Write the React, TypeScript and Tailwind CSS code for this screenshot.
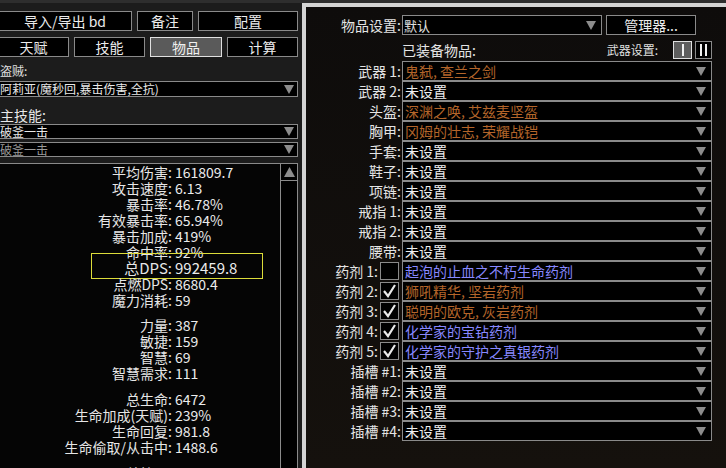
import React from 'react';

const FONT = "font-['Noto_Sans_CJK_SC','Noto_Sans',sans-serif]";

function Tri({ className = '' }: { className?: string }) {
  return (
    <svg width="10" height="9" viewBox="0 0 10 9" className={className}>
      <polygon points="0,0 10,0 5,9" fill="#8c8c8c" />
    </svg>
  );
}

function UpTri() {
  return (
    <svg width="11" height="10" viewBox="0 0 11 10">
      <polygon points="0,10 11,10 5.5,0" fill="#8c8c8c" />
    </svg>
  );
}

function Check() {
  return (
    <svg width="15" height="14" viewBox="0 0 15 14">
      <polyline points="2,7 6,12 13,1" fill="none" stroke="#e8e8e8" strokeWidth="2.2" />
    </svg>
  );
}

function Btn({ w, text, active = false }: { w: string; text: string; active?: boolean }) {
  return (
    <div
      className={`${w} h-[20px] flex items-center justify-center border text-[14px] leading-none ${
        active ? 'bg-[#5a5a5a] border-[#e0e0e0] text-[#f0f0f0]' : 'bg-black border-[#8a8a8a] text-[#ececec]'
      }`}
    >
      {text}
    </div>
  );
}

function LDrop({ text, h, dim = false }: { text: string; h: string; dim?: boolean }) {
  return (
    <div className={`${h} w-full flex items-center justify-between bg-black border border-[#8a8a8a]`}>
      <span className={`pl-[1px] text-[12px] leading-none ${dim ? 'text-[#9a9a9a]' : 'text-[#e8e8e8]'}`}>{text}</span>
      <Tri className="mr-[3px]" />
    </div>
  );
}

type Stat = { l: string; v: string; big?: boolean };

const g1: Stat[] = [
  { l: '平均伤害', v: '161809.7' },
  { l: '攻击速度', v: '6.13' },
  { l: '暴击率', v: '46.78%' },
  { l: '有效暴击率', v: '65.94%' },
  { l: '暴击加成', v: '419%' },
  { l: '命中率', v: '92%' },
  { l: '总DPS', v: '992459.8', big: true },
  { l: '点燃DPS', v: '8680.4' },
  { l: '魔力消耗', v: '59' },
];
const g2: Stat[] = [
  { l: '力量', v: '387' },
  { l: '敏捷', v: '159' },
  { l: '智慧', v: '69' },
  { l: '智慧需求', v: '111' },
];
const g3: Stat[] = [
  { l: '总生命', v: '6472' },
  { l: '生命加成(天赋)', v: '239%' },
  { l: '生命回复', v: '981.8' },
  { l: '生命偷取/从击中', v: '1488.6' },
];
const g4: Stat[] = [{ l: '总护甲', v: '0' }];

function StatLine({ s }: { s: Stat }) {
  return (
    <div className="relative flex h-[16px] items-center">
      <div className={`w-[173px] text-right text-[#e6e6e6] leading-[16px] ${s.big ? 'text-[15px]' : 'text-[14px]'}`}>
        {s.l}:
      </div>
      <div className={`pl-[3px] text-[#ececec] leading-[16px] ${s.big ? 'text-[15px]' : 'text-[14px]'}`}>{s.v}</div>
      {s.big && (
        <div className="absolute left-[92px] top-[-7px] w-[172px] h-[26px] border border-[#dcdc3a]" />
      )}
    </div>
  );
}

function Group({ items, mt }: { items: Stat[]; mt: string }) {
  return (
    <div className={mt}>
      {items.map((s) => (
        <StatLine key={s.l} s={s} />
      ))}
    </div>
  );
}

type Item = { label: string; text: string; color: string; check?: boolean };

const items: Item[] = [
  { label: '武器 1:', text: '鬼弑, 查兰之剑', color: 'text-[#b4652a]' },
  { label: '武器 2:', text: '未设置', color: 'text-[#f0f0f0]' },
  { label: '头盔:', text: '深渊之唤, 艾兹麦坚盔', color: 'text-[#b4652a]' },
  { label: '胸甲:', text: '冈姆的壮志, 荣耀战铠', color: 'text-[#b4652a]' },
  { label: '手套:', text: '未设置', color: 'text-[#f0f0f0]' },
  { label: '鞋子:', text: '未设置', color: 'text-[#f0f0f0]' },
  { label: '项链:', text: '未设置', color: 'text-[#f0f0f0]' },
  { label: '戒指 1:', text: '未设置', color: 'text-[#f0f0f0]' },
  { label: '戒指 2:', text: '未设置', color: 'text-[#f0f0f0]' },
  { label: '腰带:', text: '未设置', color: 'text-[#f0f0f0]' },
  { label: '药剂 1:', text: '起泡的止血之不朽生命药剂', color: 'text-[#8888ff]', check: false },
  { label: '药剂 2:', text: '狮吼精华, 坚岩药剂', color: 'text-[#b4652a]', check: true },
  { label: '药剂 3:', text: '聪明的欧克, 灰岩药剂', color: 'text-[#b4652a]', check: true },
  { label: '药剂 4:', text: '化学家的宝钻药剂', color: 'text-[#8888ff]', check: true },
  { label: '药剂 5:', text: '化学家的守护之真银药剂', color: 'text-[#8888ff]', check: true },
  { label: '插槽 #1:', text: '未设置', color: 'text-[#f0f0f0]' },
  { label: '插槽 #2:', text: '未设置', color: 'text-[#f0f0f0]' },
  { label: '插槽 #3:', text: '未设置', color: 'text-[#f0f0f0]' },
  { label: '插槽 #4:', text: '未设置', color: 'text-[#f0f0f0]' },
];

function ItemRow({ it }: { it: Item }) {
  const hasCheck = it.check !== undefined;
  return (
    <div className="flex h-[20px]">
      <div className="w-[96px] flex items-center justify-end">
        <span className={`text-[14px] leading-none text-[#e4e4e4] ${hasCheck ? '' : 'pr-[1px]'}`}>{it.label}</span>
        {hasCheck && (
          <div className="ml-[2px] mr-[3px] w-[19px] h-[18px] border border-[#8a8a8a] bg-black flex items-center justify-center">
            {it.check && <Check />}
          </div>
        )}
      </div>
      <div className="flex-1 flex items-center justify-between bg-black border border-[#8a8a8a]">
        <span className={`pl-[2px] text-[14px] leading-none ${it.color}`}>{it.text}</span>
        <Tri className="mr-[5px]" />
      </div>
    </div>
  );
}

export default function App() {
  return (
    <div className={`w-[726px] h-[468px] overflow-hidden flex flex-col bg-[#1c1c1c] ${FONT}`}>
      <div className="h-[3px] bg-[#2e2e2e] shrink-0" />
      <div className="flex flex-1 min-h-0">
        {/* Left panel */}
        <div className="w-[302px] shrink-0 bg-[#1c1c1c] overflow-hidden">
          <div className="ml-[-2px] w-[300px] pt-[8px] flex flex-col h-full">
            <div className="flex gap-[5px]">
              <Btn w="w-[134px]" text="导入/导出 bd" />
              <Btn w="w-[56px]" text="备注" />
              <Btn w="w-[100px]" text="配置" />
            </div>
            <div className="flex gap-[5px] mt-[6px]">
              <Btn w="w-[71px]" text="天赋" />
              <Btn w="w-[71px]" text="技能" />
              <Btn w="w-[72px]" text="物品" active />
              <Btn w="w-[71px]" text="计算" />
            </div>
            <div className="mt-[7px] h-[14px] pl-[2px] flex items-center text-[12px] leading-none text-[#e0e0e0]">盗贼:</div>
            <div className="mt-[3px]">
              <LDrop h="h-[16px]" text="阿莉亚(魔秒回,暴击伤害,全抗)" />
            </div>
            <div className="mt-[9px] h-[18px] pl-[2px] flex items-center text-[14px] leading-none text-[#e8e8e8]">主技能:</div>
            <LDrop h="h-[15px]" text="破釜一击" />
            <div className="mt-[3px]">
              <LDrop h="h-[15px]" text="破釜一击" dim />
            </div>
            <div className="mt-[6px] flex-1 flex bg-[#050505] border border-[#8a8a8a] border-b-0 min-h-0">
              <div className="flex-1 overflow-hidden">
                <Group items={g1} mt="mt-0" />
                <Group items={g2} mt="mt-[9px]" />
                <Group items={g3} mt="mt-[10px]" />
                <Group items={g4} mt="mt-[10px]" />
              </div>
              <div className="w-[17px] shrink-0 border-l border-[#8a8a8a] bg-black">
                <div className="h-[17px] border-b border-[#8a8a8a] flex items-center justify-center">
                  <UpTri />
                </div>
              </div>
            </div>
          </div>
        </div>
        {/* Right panel */}
        <div className="flex-1 border-t-4 border-l-4 border-[#d4d4d4] bg-linear-to-b from-[#0e0c0b] to-[#15110d] pt-[8px] pr-[14px]">
          <div className="flex h-[20px]">
            <div className="w-[96px] flex items-center justify-end pr-[1px] text-[14px] leading-none text-[#e4e4e4]">物品设置:</div>
            <div className="w-[200px] flex items-center justify-between bg-black border border-[#8a8a8a]">
              <span className="pl-[1px] text-[13px] leading-none text-[#e0e0e0]">默认</span>
              <Tri className="mr-[5px]" />
            </div>
            <div className="ml-[4px] w-[90px] flex items-center justify-center bg-black border border-[#8a8a8a] text-[14px] leading-none text-[#ececec]">
              管理器...
            </div>
          </div>
          <div className="flex h-[18px] mt-[6px] items-center">
            <div className="w-[96px]" />
            <div className="text-[14px] leading-none text-[#e4e4e4]">已装备物品:</div>
            <div className="ml-auto text-[12px] leading-none text-[#e0e0e0]">武器设置:</div>
            <div className="ml-[15px] w-[19px] h-[18px] bg-[#5e5e5e] border border-[#e0e0e0] flex items-center justify-center">
              <div className="w-[2px] h-[12px] bg-[#f0f0f0]" />
            </div>
            <div className="ml-[3px] w-[17px] h-[18px] bg-black border border-[#8a8a8a] flex items-center justify-center gap-[3px]">
              <div className="w-[2px] h-[12px] bg-[#f0f0f0]" />
              <div className="w-[2px] h-[12px] bg-[#f0f0f0]" />
            </div>
          </div>
          <div className="mt-[2px]">
            {items.map((it) => (
              <ItemRow key={it.label} it={it} />
            ))}
          </div>
        </div>
      </div>
    </div>
  );
}
